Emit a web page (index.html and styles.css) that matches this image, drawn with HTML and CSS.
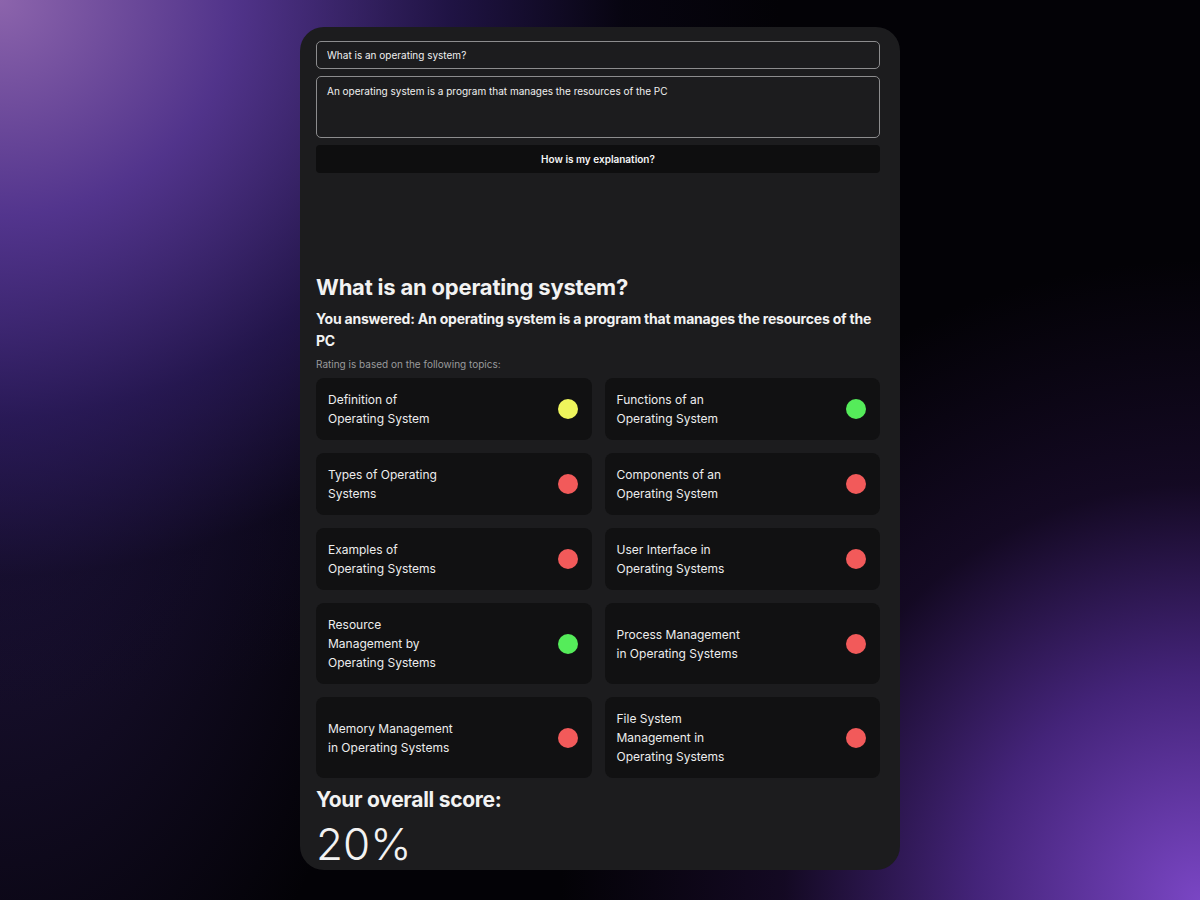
FILE: index.html
```html
<!DOCTYPE html>
<html>
<head>
    <title>Explain It</title>
    <link rel="stylesheet" href="styles.css">
</head>
<body>
    <div class="card">
        <form class="ask-form" onsubmit="return false;">
            <input type="text" class="field" value="What is an operating system?">
            <textarea class="field answer">An operating system is a program that manages the resources of the PC</textarea>
            <button type="submit" class="check-button">How is my explanation?</button>
        </form>

        <div class="result">
            <h2 class="question">What is an operating system?</h2>
            <p class="answered">You answered: An operating system is a program that manages the resources of the PC</p>
            <p class="rating-note">Rating is based on the following topics:</p>

            <div class="topics">
                <div class="topic">
                    <span class="topic-name">Definition of<br>Operating System</span>
                    <span class="dot dot-yellow"></span>
                </div>
                <div class="topic">
                    <span class="topic-name">Functions of an<br>Operating System</span>
                    <span class="dot dot-green"></span>
                </div>
                <div class="topic">
                    <span class="topic-name">Types of Operating<br>Systems</span>
                    <span class="dot dot-red"></span>
                </div>
                <div class="topic">
                    <span class="topic-name">Components of an<br>Operating System</span>
                    <span class="dot dot-red"></span>
                </div>
                <div class="topic">
                    <span class="topic-name">Examples of<br>Operating Systems</span>
                    <span class="dot dot-red"></span>
                </div>
                <div class="topic">
                    <span class="topic-name">User Interface in<br>Operating Systems</span>
                    <span class="dot dot-red"></span>
                </div>
                <div class="topic">
                    <span class="topic-name">Resource<br>Management by<br>Operating Systems</span>
                    <span class="dot dot-green"></span>
                </div>
                <div class="topic">
                    <span class="topic-name">Process Management<br>in Operating Systems</span>
                    <span class="dot dot-red"></span>
                </div>
                <div class="topic">
                    <span class="topic-name">Memory Management<br>in Operating Systems</span>
                    <span class="dot dot-red"></span>
                </div>
                <div class="topic">
                    <span class="topic-name">File System<br>Management in<br>Operating Systems</span>
                    <span class="dot dot-red"></span>
                </div>
            </div>

            <h3 class="score-title">Your overall score:</h3>
            <div class="score">20%</div>
        </div>
    </div>
</body>
</html>
```

FILE: styles.css
```css
html, body {
    height: 100%;
}
body {
    margin: 0;
    font-family: Inter, "Noto Sans", sans-serif;
    color: #f2f2f2;
    background-color: #030206;
    background-image:
        radial-gradient(ellipse 780px 720px at 0 0, rgba(140, 100, 172, 1) 0%, rgba(88, 56, 150, 0.9) 30%, rgba(46, 28, 100, 0.65) 58%, rgba(16, 10, 40, 0.3) 80%, rgba(0, 0, 0, 0) 100%),
        radial-gradient(ellipse 420px 820px at 0 320px, rgba(62, 40, 120, 0.55) 0%, rgba(0, 0, 0, 0) 100%),
        radial-gradient(ellipse 640px 640px at 1200px 900px, rgba(122, 70, 196, 1) 0%, rgba(84, 44, 150, 0.8) 35%, rgba(40, 18, 70, 0.45) 65%, rgba(0, 0, 0, 0) 100%);
    display: flex;
    justify-content: center;
    align-items: flex-start;
    box-sizing: border-box;
    padding-top: 27px;
}
.card {
    width: 600px;
    height: 843px;
    box-sizing: border-box;
    background-color: #1c1c1e;
    border-radius: 24px;
    padding: 14px 20px 0 16px;
}
.ask-form {
    display: flex;
    flex-direction: column;
    gap: 7px;
}
.field {
    box-sizing: border-box;
    width: 100%;
    height: 28px;
    background-color: #1c1c1e;
    border: 1.5px solid #8c8c8e;
    border-radius: 5px;
    color: #f0f0f0;
    font-family: Inter, "Noto Sans", sans-serif;
    font-size: 10px;
    padding: 0 10px;
    outline: none;
}
.answer {
    height: 62px;
    padding: 8px 10px;
    resize: none;
}
.check-button {
    height: 28px;
    background-color: #0e0e0f;
    border: none;
    border-radius: 4px;
    color: #f5f5f5;
    font-family: Inter, "Noto Sans", sans-serif;
    font-size: 10px;
    font-weight: 600;
    cursor: pointer;
}
.result {
    margin-top: 99px;
}
.question {
    margin: 0;
    font-size: 22px;
    font-weight: 700;
    line-height: 30px;
    letter-spacing: -0.2px;
}
.answered {
    margin: 6px 0 0;
    font-size: 14px;
    font-weight: 700;
    line-height: 22px;
    letter-spacing: -0.2px;
}
.rating-note {
    margin: 6px 0 0;
    font-size: 10px;
    color: #9a9a9c;
    line-height: 12px;
}
.topics {
    margin-top: 8px;
    display: grid;
    grid-template-columns: 1fr 1fr;
    gap: 13px 13px;
}
.topic {
    min-height: 62px;
    box-sizing: border-box;
    background-color: #111112;
    border-radius: 8px;
    padding: 12px 14px 12px 12px;
    display: flex;
    justify-content: space-between;
    align-items: center;
}
.topic-name {
    font-size: 12px;
    line-height: 19px;
    color: #ededed;
}
.dot {
    width: 20px;
    height: 20px;
    border-radius: 50%;
    flex-shrink: 0;
}
.dot-yellow {
    background-color: #eef55c;
}
.dot-green {
    background-color: #55ec5a;
}
.dot-red {
    background-color: #f25a5a;
}
.score-title {
    margin: 9px 0 0;
    font-size: 21px;
    font-weight: 700;
    line-height: 26px;
    letter-spacing: -0.3px;
}
.score {
    font-size: 44px;
    font-weight: 300;
    line-height: 50px;
    margin-top: 6px;
}
```
